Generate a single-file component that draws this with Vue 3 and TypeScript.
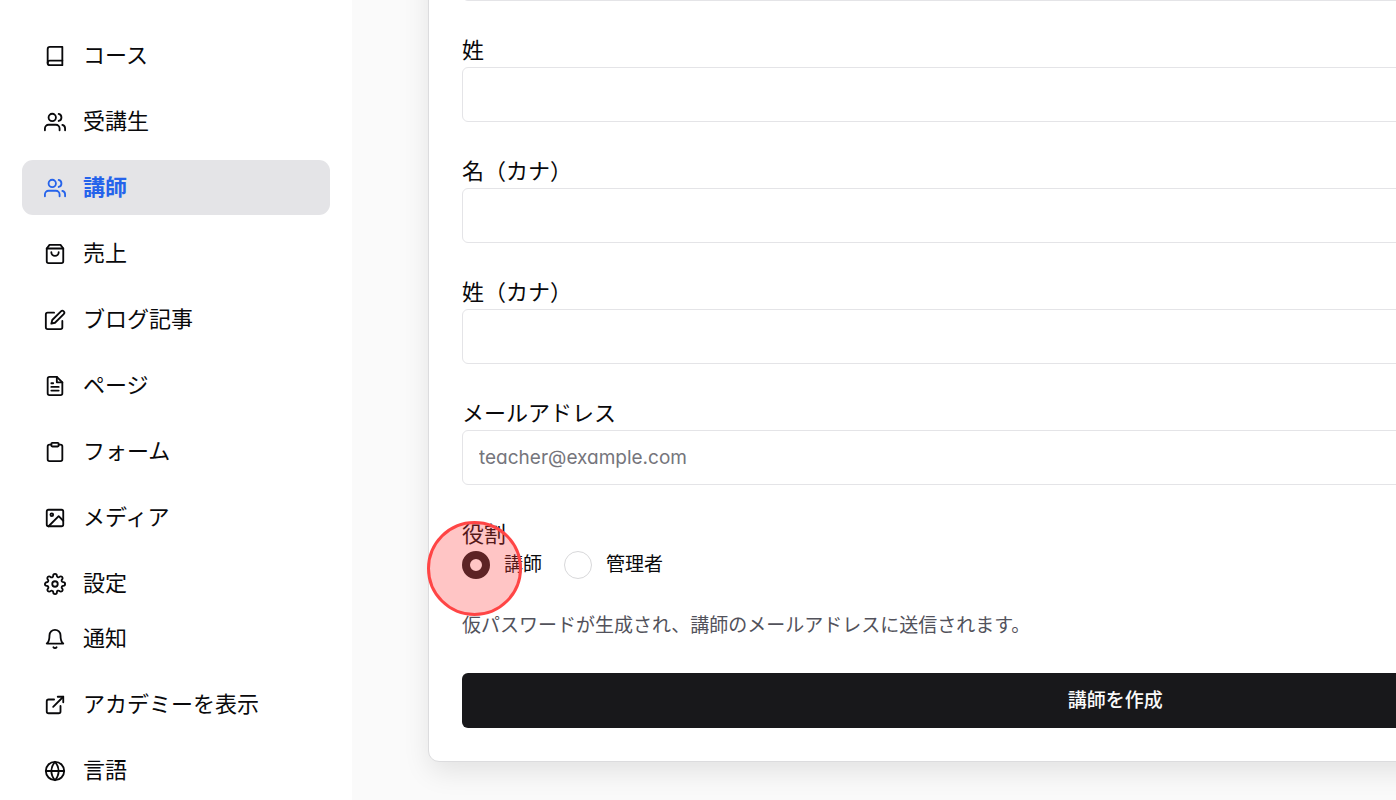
<script setup lang="ts">
import { ref } from 'vue'

interface NavItem {
  label: string
  paths: string[]
  active?: boolean
}

interface Field {
  id: string
  label: string
  type: string
  placeholder?: string
}

const usersPaths = [
  'M17 21v-2a4 4 0 0 0-4-4H5a4 4 0 0 0-4 4v2',
  'M5 7a4 4 0 1 0 8 0a4 4 0 1 0-8 0',
  'M23 21v-2a4 4 0 0 0-3-3.87',
  'M16 3.13a4 4 0 0 1 0 7.75',
]

const mainNav: NavItem[] = [
  {
    label: 'コース',
    paths: [
      'M4 19.5A2.5 2.5 0 0 1 6.5 17H20',
      'M6.5 2H20v20H6.5A2.5 2.5 0 0 1 4 19.5v-15A2.5 2.5 0 0 1 6.5 2z',
    ],
  },
  { label: '受講生', paths: usersPaths },
  { label: '講師', paths: usersPaths, active: true },
  {
    label: '売上',
    paths: ['M6 2 3 6v14a2 2 0 0 0 2 2h14a2 2 0 0 0 2-2V6l-3-4z', 'M3 6h18', 'M16 10a4 4 0 0 1-8 0'],
  },
  {
    label: 'ブログ記事',
    paths: [
      'M11 4H4a2 2 0 0 0-2 2v14a2 2 0 0 0 2 2h14a2 2 0 0 0 2-2v-7',
      'M18.5 2.5a2.121 2.121 0 0 1 3 3L12 15l-4 1 1-4 9.5-9.5z',
    ],
  },
  {
    label: 'ページ',
    paths: [
      'M14 2H6a2 2 0 0 0-2 2v16a2 2 0 0 0 2 2h12a2 2 0 0 0 2-2V8z',
      'M14 2v6h6',
      'M16 13H8',
      'M16 17H8',
      'M10 9H8',
    ],
  },
  {
    label: 'フォーム',
    paths: [
      'M9 2h6a1 1 0 0 1 1 1v2a1 1 0 0 1-1 1H9a1 1 0 0 1-1-1V3a1 1 0 0 1 1-1z',
      'M16 4h2a2 2 0 0 1 2 2v14a2 2 0 0 1-2 2H6a2 2 0 0 1-2-2V6a2 2 0 0 1 2-2h2',
    ],
  },
  {
    label: 'メディア',
    paths: [
      'M5 3h14a2 2 0 0 1 2 2v14a2 2 0 0 1-2 2H5a2 2 0 0 1-2-2V5a2 2 0 0 1 2-2z',
      'M7 8.5a1.5 1.5 0 1 0 3 0a1.5 1.5 0 1 0-3 0',
      'M21 15l-5-5L5 21',
    ],
  },
  {
    label: '設定',
    paths: [
      'M9 12a3 3 0 1 0 6 0a3 3 0 1 0-6 0',
      'M19.4 15a1.65 1.65 0 0 0 .33 1.82l.06.06a2 2 0 0 1 0 2.83 2 2 0 0 1-2.83 0l-.06-.06a1.65 1.65 0 0 0-1.82-.33 1.65 1.65 0 0 0-1 1.51V21a2 2 0 0 1-2 2 2 2 0 0 1-2-2v-.09A1.65 1.65 0 0 0 9 19.4a1.65 1.65 0 0 0-1.82.33l-.06.06a2 2 0 0 1-2.83 0 2 2 0 0 1 0-2.83l.06-.06a1.65 1.65 0 0 0 .33-1.82 1.65 1.65 0 0 0-1.51-1H3a2 2 0 0 1-2-2 2 2 0 0 1 2-2h.09A1.65 1.65 0 0 0 4.6 9a1.65 1.65 0 0 0-.33-1.82l-.06-.06a2 2 0 0 1 0-2.83 2 2 0 0 1 2.83 0l.06.06a1.65 1.65 0 0 0 1.82.33H9a1.65 1.65 0 0 0 1-1.51V3a2 2 0 0 1 2-2 2 2 0 0 1 2 2v.09a1.65 1.65 0 0 0 1 1.51 1.65 1.65 0 0 0 1.82-.33l.06-.06a2 2 0 0 1 2.83 0 2 2 0 0 1 0 2.83l-.06.06a1.65 1.65 0 0 0-.33 1.82V9a1.65 1.65 0 0 0 1.51 1H21a2 2 0 0 1 2 2 2 2 0 0 1-2 2h-.09a1.65 1.65 0 0 0-1.51 1z',
    ],
  },
]

const footerNav: NavItem[] = [
  {
    label: '通知',
    paths: ['M18 8A6 6 0 0 0 6 8c0 7-3 9-3 9h18s-3-2-3-9', 'M13.73 21a2 2 0 0 1-3.46 0'],
  },
  {
    label: 'アカデミーを表示',
    paths: ['M15 3h6v6', 'M10 14 21 3', 'M18 13v6a2 2 0 0 1-2 2H5a2 2 0 0 1-2-2V8a2 2 0 0 1 2-2h6'],
  },
  {
    label: '言語',
    paths: [
      'M2 12a10 10 0 1 0 20 0a10 10 0 1 0-20 0',
      'M2 12h20',
      'M12 2a15.3 15.3 0 0 1 4 10 15.3 15.3 0 0 1-4 10 15.3 15.3 0 0 1-4-10 15.3 15.3 0 0 1 4-10z',
    ],
  },
]

const navGroups = [mainNav, footerNav]

const fields: Field[] = [
  { id: 'first-name', label: '名', type: 'text' },
  { id: 'last-name', label: '姓', type: 'text' },
  { id: 'first-kana', label: '名（カナ）', type: 'text' },
  { id: 'last-kana', label: '姓（カナ）', type: 'text' },
  { id: 'email', label: 'メールアドレス', type: 'email', placeholder: 'teacher@example.com' },
]

const roles = [
  { value: 'teacher', label: '講師' },
  { value: 'admin', label: '管理者' },
]

const role = ref('teacher')
</script>

<template>
  <div class="app">
    <nav class="sidebar">
      <ul v-for="(group, index) in navGroups" :key="index" class="nav-list">
        <li v-for="item in group" :key="item.label">
          <a href="#" class="nav-link" :class="{ active: item.active }">
            <svg class="icon" viewBox="0 0 24 24" aria-hidden="true">
              <path v-for="d in item.paths" :key="d" :d="d" />
            </svg>
            <span>{{ item.label }}</span>
          </a>
        </li>
      </ul>
    </nav>

    <main class="content">
      <form class="card" @submit.prevent>
        <div v-for="field in fields" :key="field.id" class="field">
          <label :for="field.id">{{ field.label }}</label>
          <input :id="field.id" class="text-input" :type="field.type" :placeholder="field.placeholder" />
        </div>

        <fieldset class="roles">
          <legend>役割</legend>
          <div class="role-options">
            <label v-for="option in roles" :key="option.value" class="role">
              <span class="radio-wrap">
                <input v-model="role" type="radio" name="role" :value="option.value" />
                <span v-if="option.value === 'teacher'" class="click-marker"></span>
              </span>
              <span>{{ option.label }}</span>
            </label>
          </div>
        </fieldset>

        <p class="note">仮パスワードが生成され、講師のメールアドレスに送信されます。</p>
        <button type="submit" class="submit">講師を作成</button>
      </form>
    </main>
  </div>
</template>

<style>
body {
  margin: 0;
}
</style>

<style scoped>
.app {
  display: flex;
  height: 100vh;
  overflow: hidden;
  background: #fafafa;
  color: #09090b;
  font-family: Inter, "Noto Sans CJK JP", sans-serif;
  font-size: 22px;
  line-height: 33px;
}

.sidebar {
  flex: 0 0 352px;
  box-sizing: border-box;
  padding: 28px 22px 0;
  background: #fff;
}

.nav-list {
  display: grid;
  gap: 11px;
  margin: 0;
  padding: 0;
  list-style: none;
}

.nav-link {
  display: flex;
  align-items: center;
  gap: 17px;
  padding: 11px 22px;
  border-radius: 11px;
  color: inherit;
  text-decoration: none;
}

.nav-link.active {
  background: #e4e4e7;
  color: #2563eb;
  font-weight: 700;
}

.icon {
  flex: none;
  width: 22px;
  height: 22px;
  fill: none;
  stroke: currentColor;
  stroke-width: 2;
  stroke-linecap: round;
  stroke-linejoin: round;
}

.content {
  flex: 1;
  min-width: 0;
  box-sizing: border-box;
  display: flex;
  flex-direction: column;
  justify-content: flex-end;
  padding: 0 0 38px 76px;
  overflow: hidden;
}

.card {
  box-sizing: border-box;
  display: grid;
  gap: 33px;
  width: 142%;
  padding: 33px;
  border: 1px solid #dcdcde;
  border-radius: 11px;
  background: #fff;
  box-shadow: 0 11px 28px -2px rgba(0, 0, 0, 0.1);
}

.field {
  display: grid;
}

.text-input {
  box-sizing: border-box;
  width: 100%;
  height: 55px;
  padding: 0 16px;
  border: 1px solid #e4e4e7;
  border-radius: 6px;
  background: #fff;
  color: inherit;
  font: inherit;
  font-size: 19px;
  font-feature-settings: "cv11";
}

.text-input::placeholder {
  color: #75757c;
}

.roles {
  min-width: 0;
  margin: 0;
  padding: 0;
  border: 0;
}

.roles legend {
  padding: 0;
}

.role-options {
  display: flex;
  gap: 22px;
}

.role {
  display: flex;
  align-items: center;
  gap: 14px;
  font-size: 19px;
  line-height: 28px;
}

.radio-wrap {
  position: relative;
  display: flex;
}

.radio-wrap input {
  appearance: none;
  box-sizing: border-box;
  width: 28px;
  height: 28px;
  margin: 0;
  border: 1px solid #d8d8da;
  border-radius: 50%;
  background: #fff;
}

.radio-wrap input:checked {
  border: 8px solid #18181b;
}

.click-marker {
  position: absolute;
  top: -30px;
  left: -35px;
  box-sizing: border-box;
  width: 95px;
  height: 95px;
  border: 3px solid #ff4545;
  border-radius: 50%;
  background: rgba(255, 64, 64, 0.3);
  pointer-events: none;
}

.note {
  margin: 0;
  color: #52525b;
  font-size: 19px;
  line-height: 28px;
}

.submit {
  height: 55px;
  padding: 0 22px;
  border: 0;
  border-radius: 6px;
  background: #18181b;
  color: #fafafa;
  font: inherit;
  font-size: 19px;
  font-weight: 500;
}
</style>
